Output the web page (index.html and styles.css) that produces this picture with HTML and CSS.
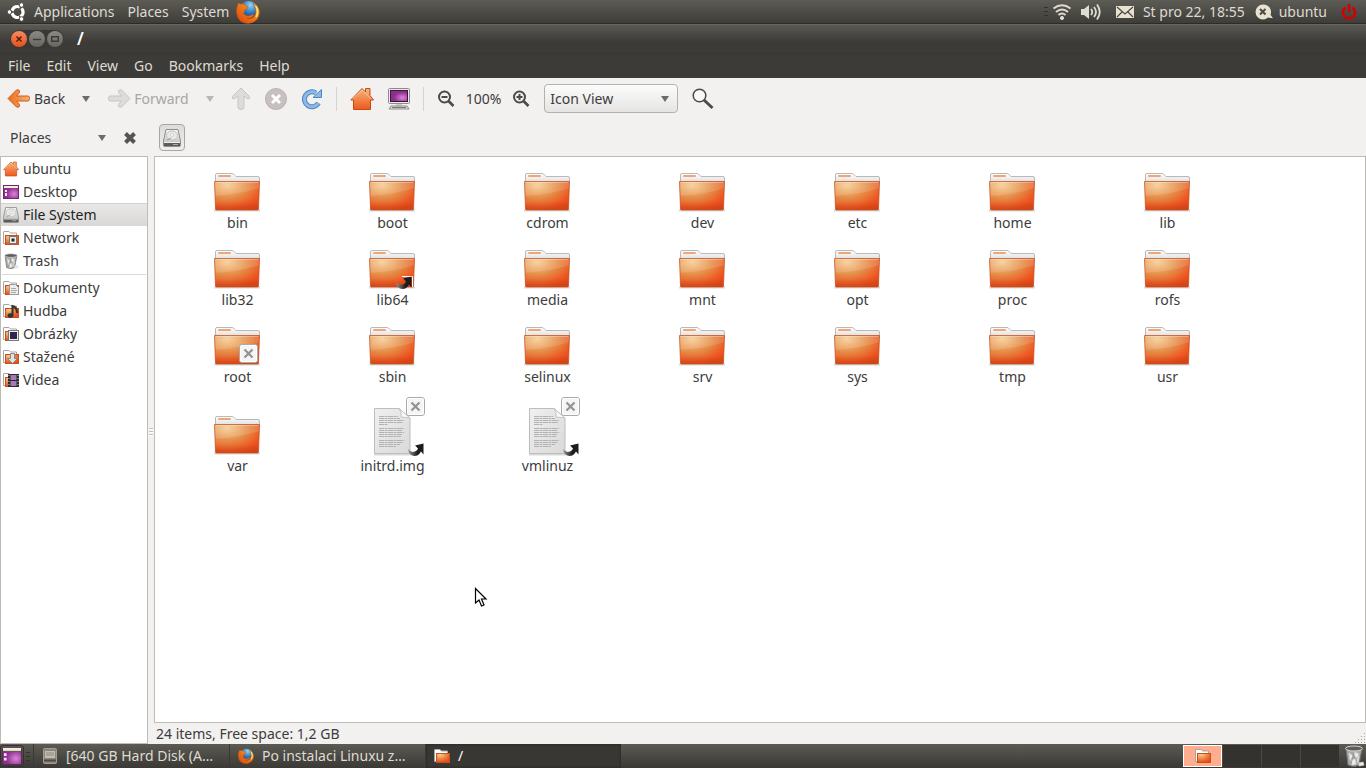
FILE: index.html
```html
<!DOCTYPE html>
<html lang="en">
<head>
<meta charset="utf-8">
<title>/ - File Browser</title>
<link rel="stylesheet" href="styles.css">
</head>
<body>
<svg class="defs" aria-hidden="true">
  <defs>
    <radialGradient id="gFolder" cx=".28" cy=".12" r=".95"><stop offset="0" stop-color="#f6cd92"/><stop offset=".5" stop-color="#e58a45"/><stop offset=".85" stop-color="#ee5420"/><stop offset="1" stop-color="#e24a1a"/></radialGradient>
    <linearGradient id="gShade" x2="0" y2="1"><stop offset=".7" stop-color="#a3330d" stop-opacity="0"/><stop offset="1" stop-color="#a3330d" stop-opacity=".3"/></linearGradient>
    <linearGradient id="gBack" x2="0" y2="1"><stop offset="0" stop-color="#fff"/><stop offset="1" stop-color="#dcdcdc"/></linearGradient>
    <linearGradient id="gDoc" x2="1" y2="1"><stop offset="0" stop-color="#f0f0f0"/><stop offset="1" stop-color="#d9d9d9"/></linearGradient>
    <linearGradient id="gHome" x2="0" y2="1"><stop offset="0" stop-color="#f3b77c"/><stop offset="1" stop-color="#f0571c"/></linearGradient>
    <linearGradient id="gArrow" x1="0" x2="1"><stop offset="0" stop-color="#ee6d1c"/><stop offset="1" stop-color="#f4b476"/></linearGradient>
    <radialGradient id="gPurple" cx=".7" cy=".65"><stop offset="0" stop-color="#dd84d6"/><stop offset="1" stop-color="#8d2f8e"/></radialGradient>
    <linearGradient id="gLink" x2="1"><stop offset="0" stop-color="#999"/><stop offset=".6" stop-color="#1c1c1c"/></linearGradient>
    <linearGradient id="gMetal" x2="0" y2="1"><stop offset="0" stop-color="#f6f6f4"/><stop offset="1" stop-color="#b9b9b6"/></linearGradient>
    <radialGradient id="gGlobe" cx=".6" cy=".2" r=".8"><stop offset="0" stop-color="#8fd5f5"/><stop offset=".5" stop-color="#2c78bd"/><stop offset="1" stop-color="#12285e"/></radialGradient>
    <linearGradient id="gFox" x1="0" y1="1" x2="1" y2="0"><stop offset="0" stop-color="#d8400f"/><stop offset=".6" stop-color="#f0801c"/><stop offset="1" stop-color="#fcd34a"/></linearGradient>
  </defs>
  <symbol id="folder" viewBox="0 0 49 40">
    <path d="M1 37.5h46" stroke="#000" stroke-opacity=".15" stroke-width="2"/>
    <path d="M2.500 10V2Q2.500 .5 4 .5H19Q20.500 .5 22 2.500L23 3.500H45Q46.500 3.500 46.500 5V10z" fill="url(#gBack)" stroke="#b9b9b9"/>
    <rect x="5" y="2" width="13" height="2" rx="1" fill="#f0a672"/>
    <path d="M1.500 8.500H46.500L45.500 36Q45.500 37 44.500 37H3.500Q2.500 37 2.500 36z" fill="url(#gFolder)"/>
    <path d="M1.500 8.500H46.500L46.100 15Q30 21 2 23z" fill="#fff" fill-opacity=".13"/>
    <path d="M1.500 8.500H46.500L45.500 36Q45.500 37 44.500 37H3.500Q2.500 37 2.500 36z" fill="url(#gShade)" stroke="#c4501f" stroke-opacity=".75"/>
    <path d="M2.500 9.500H45.500" stroke="#fff" stroke-opacity=".3"/>
  </symbol>
  <symbol id="link" viewBox="0 0 16 14">
    <path d="M0 6Q3 10 7 8.500Q9.500 7.500 10 5.500L7 2.500L15.500 .5V11.500L13 8.500Q10.500 13 6.500 13Q1 13 0 6z" fill="url(#gLink)"/>
  </symbol>
  <symbol id="locked" viewBox="0 0 20 20">
    <rect x=".5" y=".5" width="18" height="18" rx="2.500" fill="#f5f5f5" stroke="#aaa"/><rect x="1.500" y="1.500" width="16" height="16" rx="1.500" fill="none" stroke="#fff"/>
    <path d="M5.500 5.500l8 8m0-8l-8 8" stroke="#929292" stroke-width="2.200"/>
  </symbol>
  <symbol id="doc" viewBox="0 0 67 52">
    <path d="M15 50.500h37" stroke="#000" stroke-opacity=".15" stroke-width="2"/>
    <path d="M15.500 4.500H40L51 14V49.500H15.500z" fill="url(#gDoc)" stroke="#bdbdbd"/>
    <path d="M40 4.500Q43 8 42 13L51 14z" fill="#fafafa" stroke="#c4c4c4"/>
    <path d="M20 12.500h19M20 14.500h21M20 16.500h25M20 18.500h24M20 20.500h9M20 24.500h25M20 26.500h23M20 28.500h25M20 30.500h23M20 32.500h22M20 36.500h25M20 38.500h24M20 40.500h21M20 42.500h17" stroke="#b2b2b2" stroke-dasharray="5 .5 3 .5"/>
  </symbol>
  <symbol id="mini" viewBox="0 0 16 16">
    <path d="M.5 13.500V2Q.5 1.500 1 1.500H6L7.500 3H13.500V7H4V13.500z" fill="#fff" stroke="#a5a5a5"/>
    <rect x="2.500" y="5.500" width="13" height="9" fill="url(#gFolder)" stroke="#c8501f"/>
  </symbol>
  <symbol id="home" viewBox="0 0 24 24">
    <path d="M12 1.500L15.500 5V1.500H20V8.500L23.500 13H20.500V22.500H3.500V13H.8z" fill="url(#gHome)" stroke="#c14e14" stroke-linejoin="round"/>
    <path d="M2.500 12L12 3L21.500 12" fill="none" stroke="#fbd3a8" stroke-opacity=".7"/>
  </symbol>
  <symbol id="desk" viewBox="0 0 22 20">
    <rect x=".5" y=".5" width="21" height="19" rx="1" fill="url(#gPurple)" stroke="#5f2460"/><rect x="1" y="1" width="20" height="3.500" fill="#eeeedb"/><path d="M1 4.800h20" stroke="#5d6040"/>
    <path d="M2 7h3v3H2zM2 12h3v3H2z" fill="#f4e8f4"/>
  </symbol>
  <symbol id="disk" viewBox="0 0 18 18">
    <path d="M3 .5H15L17.500 12V16.500Q17.500 17.500 16.500 17.500H1.500Q.5 17.500 .5 16.500V12z" fill="url(#gMetal)" stroke="#8e8e8c"/>
    <path d="M1 13h16v4H1z" fill="#5b5b5b"/><path d="M1 13.500h16" stroke="#eee"/><path d="M10 15.500h5" stroke="#aaa"/>
    <ellipse cx="9" cy="6.500" rx="5.500" ry="4.500" fill="#e9e9e7" stroke="#c4c4c2"/><circle cx="9" cy="6" r="1.500" fill="#fff" stroke="#bbb" stroke-width=".6"/><path d="M4 11l4-2" stroke="#999"/>
  </symbol>
  <symbol id="trash" viewBox="0 0 20 22">
    <path d="M2 4L4 20Q10 23 15 20L18 4z" fill="#a9aaa8" stroke="#6d6e6c"/>
    <path d="M5 8l4 3-3 4zM10 7l5 2-3 5zM7 15l4-1 1 5-4 1zM13 14l2-3-1 7zM15 18l4-1 1 3-5 1z" fill="#ececea" stroke="#d5d5d3" stroke-width=".8"/>
    <path d="M9 11l-2 8M10 7l-1 4 4 3" stroke="#8a8b89" fill="none" stroke-width=".8"/>
    <ellipse cx="10" cy="3.500" rx="8.500" ry="2.500" fill="#5e5f5d" stroke="#d5d5d3"/>
  </symbol>
  <symbol id="fox" viewBox="0 0 24 24">
    <circle cx="12.500" cy="11" r="10" fill="url(#gGlobe)"/>
    <path d="M2 4Q3 2 4 4Q7 3 9 5L12 7Q11 9 8.500 10Q9 12 7.500 13Q9 16.500 13 16Q16 14.500 18 14.500Q16 19 11 18Q17 20 19.500 14Q21 9 17 3Q23.500 6.500 23.500 12.500Q23 22 12.500 23.500Q1.500 23 .5 13Q0 8 2 4z" fill="url(#gFox)" stroke="#c34d0c" stroke-width=".5"/>
    <path d="M20 6Q23 12 20 17" stroke="#fde377" stroke-width="1.500" fill="none"/>
  </symbol>
</svg>

<header class="panel panel-top">
  <nav class="panel-menu">
    <button class="pbtn"><svg class="logo" width="20" height="20" viewBox="0 0 20 20"><circle cx="10.500" cy="10" r="5.500" fill="none" stroke="#fff" stroke-width="3.200" stroke-dasharray="9.600 1.920" transform="rotate(70 10.500 10)"/><g fill="#fff" stroke="#4b4a45"><circle cx="2.500" cy="10" r="2.300"/><circle cx="14.500" cy="3" r="2.300"/><circle cx="14.500" cy="17" r="2.300"/></g></svg>Applications</button>
    <button class="pbtn">Places</button>
    <button class="pbtn">System</button>
    <button class="pbtn launcher" aria-label="Firefox"><svg width="24" height="24"><use href="#fox"/></svg></button>
  </nav>
  <div class="indicators">
    <span class="grip"></span>
    <svg class="wifi" width="20" height="18" viewBox="0 0 20 18" fill="none" stroke="#dfdbd2" stroke-width="2"><path d="M1.500 5.500Q10-1 18.500 5.500M4 9Q10 4 16 9M6.500 12Q10 9 13.500 12"/><circle cx="10" cy="15" r="1.600" fill="#dfdbd2" stroke-width="1"/></svg>
    <svg class="sound" width="22" height="18" viewBox="0 0 22 18" fill="none" stroke="#dfdbd2"><path d="M1 6h3l5-4v14l-5-4H1z" fill="#dfdbd2" stroke="none"/><path d="M11 6q2.500 3 0 6M14 4q4 5 0 10M17 1.500q5.500 7.500 0 15" stroke-width="1.800"/></svg>
    <svg class="mail" width="18" height="14" viewBox="0 0 18 14"><rect y="1" width="18" height="12" fill="#e8e2cf"/><path d="M1 2l8 7 8-7M1 12l5-5M17 12l-5-5" fill="none" stroke="#4a4945" stroke-width="1.200"/></svg>
    <time class="clock">St pro 22, 18:55</time>
    <svg class="chat" width="18" height="16" viewBox="0 0 18 16"><path d="M8 .5a7.500 7.500 0 1 0 0 15 8 8 0 0 0 5-2l5 .8-2.500-3.500A7.500 7.500 0 0 0 8 .5z" fill="#e8e2cf"/><path d="M5 5l5.500 5.500m0-5.500L5 10.500" stroke="#4a4945" stroke-width="2"/></svg>
    <span class="user">ubuntu</span>
    <svg class="power" width="16" height="18" viewBox="0 0 16 18" fill="none" stroke="#d40000" stroke-width="2.600"><path d="M4.500 4.500a6 6 0 1 0 7 0M8 1v8"/></svg>
  </div>
</header>

<main class="window">
  <div class="titlebar">
    <div class="winbtns">
      <button class="wb close" aria-label="Close"><svg width="8" height="8"><path d="M1.500 1.500l5 5m0-5l-5 5" stroke="#4b1b08" stroke-width="1.400"/></svg></button>
      <button class="wb" aria-label="Minimize"><svg width="8" height="8"><path d="M0 4.500h8" stroke="#3c3b37" stroke-width="1.400"/></svg></button>
      <button class="wb" aria-label="Maximize"><svg width="8" height="8"><path d="M.7 1.700h6.600v4.600H.7z" fill="none" stroke="#3c3b37" stroke-width="1.400"/></svg></button>
    </div>
    <h1>/</h1>
  </div>
  <nav class="menubar"><button>File</button><button>Edit</button><button>View</button><button>Go</button><button>Bookmarks</button><button>Help</button></nav>

  <div class="toolbar">
    <button class="tb nav-btn"><svg width="24" height="22" viewBox="0 0 24 22"><path d="M1 10.500L9.500 2Q12 1 12.500 3V4.500L9.500 8H21Q22.500 8 22.500 10.500T21 13H9.500L12.500 16.500V18Q12 20 9.500 19z" fill="url(#gArrow)" stroke="#d05a1a"/></svg>Back</button>
    <button class="tb drop" aria-label="Back history"><i class="tri"></i></button>
    <button class="tb nav-btn fwd" disabled><svg width="24" height="22" viewBox="0 0 24 22"><path d="M23 10.500L14.500 2Q12 1 11.500 3V4.500L14.500 8H3Q1.500 8 1.500 10.500T3 13H14.500L11.500 16.500V18Q12 20 14.500 19z" fill="#dedbd9" stroke="#c8c4c1"/></svg>Forward</button>
    <button class="tb drop" disabled aria-label="Forward history"><i class="tri off"></i></button>
    <button class="tb" disabled aria-label="Up"><svg width="20" height="24" viewBox="0 0 20 24"><path d="M10 1L18.500 9.500Q19 12 17 12L13 9V20Q13 22.500 10 22.500T7 20V9L3 12Q1 12 1.500 9.500z" fill="#dedbd9" stroke="#c8c4c1"/></svg></button>
    <button class="tb" disabled aria-label="Stop"><svg width="22" height="22"><circle cx="11" cy="11" r="10.500" fill="#c6c1be" stroke="#b8b3b0"/><path d="M7 7l8 8m0-8l-8 8" stroke="#fff" stroke-width="3"/></svg></button>
    <button class="tb" aria-label="Reload"><svg width="22" height="22" viewBox="0 0 22 22"><path d="M17.500 15A7.500 7.500 0 1 1 15 5" fill="none" stroke="#4b87c4" stroke-width="5"/><path d="M17.500 15A7.500 7.500 0 1 1 15 5" fill="none" stroke="#8db9e2" stroke-width="3"/><path d="M12 9.500L20.500 1.500V9.500z" fill="#8db9e2" stroke="#4b87c4"/></svg></button>
    <span class="vsep"></span>
    <button class="tb" aria-label="Home"><svg width="24" height="24"><use href="#home"/></svg></button>
    <button class="tb" aria-label="Computer"><svg width="22" height="24" viewBox="0 0 22 24"><rect x=".5" y="1.500" width="21" height="15" rx="1" fill="#e9e9e6" stroke="#8c8c88"/><rect x="2.500" y="3.500" width="17" height="11" fill="url(#gPurple)" stroke="#3f123f"/><path d="M8 17h6v3H8z" fill="#ccc"/><path d="M3 19h16l2 3H1z" fill="#e0e0dd" stroke="#8c8c88"/><path d="M4 20.500h14" stroke="#777"/></svg></button>
    <span class="vsep"></span>
    <button class="tb" aria-label="Zoom out"><svg width="18" height="18" viewBox="0 0 18 18" fill="none" stroke="#4a4a4a"><circle cx="7.500" cy="7" r="5.500" stroke-width="2"/><path d="M4.500 7h6" stroke-width="2"/><path d="M11.500 11l5 5" stroke-width="2.600"/></svg></button>
    <span class="zoom">100%</span>
    <button class="tb" aria-label="Zoom in"><svg width="18" height="18" viewBox="0 0 18 18" fill="none" stroke="#4a4a4a"><circle cx="7.500" cy="7" r="5.500" stroke-width="2"/><path d="M4.500 7h6M7.500 4v6" stroke-width="2"/><path d="M11.500 11l5 5" stroke-width="2.600"/></svg></button>
    <span class="combo"><select aria-label="View mode"><option>Icon View</option></select><i class="tri"></i></span>
    <button class="tb" aria-label="Search"><svg width="22" height="22" viewBox="0 0 22 22" fill="none" stroke="#4a4a4a"><circle cx="7.500" cy="7.500" r="6.300" fill="#f8f8f8" stroke-width="1.500"/><path d="M12 12l8.500 8" stroke-width="3"/></svg></button>
  </div>

  <div class="location">
    <div class="side-head"><button class="side-sel">Places<i class="tri"></i></button><button class="side-close" aria-label="Close side pane"><svg width="14" height="14"><path d="M2.500 2.500l9 9m0-9l-9 9" stroke="#555" stroke-width="4"/></svg></button></div>
    <button class="path-btn" aria-label="File System"><svg width="18" height="18"><use href="#disk"/></svg></button>
  </div>

  <div class="body">
    <aside class="side">
      <a href="#"><svg width="16" height="16"><use href="#home"/></svg>ubuntu</a>
      <a href="#"><svg width="16" height="16" viewBox="0 0 16 16"><rect x=".5" y="1.500" width="15" height="13" fill="url(#gPurple)" stroke="#6d2a6e"/><path d="M1 2h14v2H1z" fill="#eeeedb"/><path d="M2 6h2v2H2zM2 9h2v3H2z" fill="#f4e8f4"/></svg>Desktop</a>
      <a href="#" class="sel"><svg width="16" height="16"><use href="#disk"/></svg>File System</a>
      <a href="#"><svg width="16" height="16"><use href="#mini"/><rect x="6.500" y="6.500" width="7" height="7" fill="#eee" stroke="#777"/><path d="M8.500 8.500h3v3h-3z" fill="#222"/></svg>Network</a>
      <a href="#"><svg width="16" height="16"><use href="#trash"/></svg>Trash</a>
      <hr>
      <a href="#"><svg width="16" height="16"><use href="#mini"/><path d="M6.500 4.500h6l3 3v7h-9z" fill="#eee" stroke="#999"/><path d="M8 8.500h5M8 10.500h6M8 12.500h5" stroke="#aaa"/></svg>Dokumenty</a>
      <a href="#"><svg width="16" height="16"><use href="#mini"/><path d="M9.500 12V3Q14 4 14 10" fill="none" stroke="#333" stroke-width="2"/><ellipse cx="7.500" cy="12.500" rx="2.800" ry="2.300" fill="#333"/></svg>Hudba</a>
      <a href="#"><svg width="16" height="16"><use href="#mini"/><rect x="5.500" y="4.500" width="10" height="10" fill="#eee" stroke="#777"/><rect x="7" y="6" width="7" height="7" fill="#32254a"/></svg>Obrázky</a>
      <a href="#"><svg width="16" height="16"><use href="#mini"/><path d="M7.500 4.500h4v5h3l-5 5-5-5h3z" fill="#e2e2e2" stroke="#888"/></svg>Stažené</a>
      <a href="#"><svg width="16" height="16"><use href="#mini"/><path d="M5 2h11v13H5z" fill="#2b2b2b"/><path d="M7.500 3h6v5h-6zM7.500 9h6v5h-6z" fill="#a679b4"/><path d="M6 3v12M15 3v12" stroke="#ccc" stroke-dasharray="1 2"/></svg>Videa</a>
    </aside>
    <div class="splitter"><span class="grip light"></span></div>
    <section class="content">
      <div class="files">
        <a href="#"><svg class="ic"><use href="#folder"/></svg>bin</a>
        <a href="#"><svg class="ic"><use href="#folder"/></svg>boot</a>
        <a href="#"><svg class="ic"><use href="#folder"/></svg>cdrom</a>
        <a href="#"><svg class="ic"><use href="#folder"/></svg>dev</a>
        <a href="#"><svg class="ic"><use href="#folder"/></svg>etc</a>
        <a href="#"><svg class="ic"><use href="#folder"/></svg>home</a>
        <a href="#"><svg class="ic"><use href="#folder"/></svg>lib</a>
        <a href="#"><svg class="ic"><use href="#folder"/></svg>lib32</a>
        <a href="#"><svg class="ic"><use href="#folder"/><path d="M44.500 37V26.500H34" fill="none" stroke="#fff"/><use href="#link" x="28" y="26" width="16" height="14"/></svg>lib64</a>
        <a href="#"><svg class="ic"><use href="#folder"/></svg>media</a>
        <a href="#"><svg class="ic"><use href="#folder"/></svg>mnt</a>
        <a href="#"><svg class="ic"><use href="#folder"/></svg>opt</a>
        <a href="#"><svg class="ic"><use href="#folder"/></svg>proc</a>
        <a href="#"><svg class="ic"><use href="#folder"/></svg>rofs</a>
        <a href="#"><svg class="ic"><use href="#folder"/><use href="#locked" x="26" y="17" width="20" height="20"/></svg>root</a>
        <a href="#"><svg class="ic"><use href="#folder"/></svg>sbin</a>
        <a href="#"><svg class="ic"><use href="#folder"/></svg>selinux</a>
        <a href="#"><svg class="ic"><use href="#folder"/></svg>srv</a>
        <a href="#"><svg class="ic"><use href="#folder"/></svg>sys</a>
        <a href="#"><svg class="ic"><use href="#folder"/></svg>tmp</a>
        <a href="#"><svg class="ic"><use href="#folder"/></svg>usr</a>
        <a href="#"><svg class="ic"><use href="#folder"/></svg>var</a>
        <a href="#"><svg class="ic tall"><use href="#doc"/><use href="#locked" x="47" y="-7" width="20" height="20"/><use href="#link" x="49" y="39" width="16" height="14"/></svg>initrd.img</a>
        <a href="#"><svg class="ic tall"><use href="#doc"/><use href="#locked" x="47" y="-7" width="20" height="20"/><use href="#link" x="49" y="39" width="16" height="14"/></svg>vmlinuz</a>
      </div>
      <footer class="status">24 items, Free space: 1,2 GB<svg width="11" height="11"><path d="M9.500 0v11M6.500 3v8M3.500 6v5M.5 9v2" stroke="#aaa69f" stroke-dasharray="1 2"/></svg></footer>
    </section>
  </div>
</main>

<footer class="panel panel-bottom">
  <button class="show-desk" aria-label="Show desktop"><svg width="22" height="18" viewBox="0 0 22 18"><use href="#desk" width="22" height="18"/></svg></button>
  <span class="grip"></span>
  <button class="task"><svg width="16" height="16"><rect x="1.500" y=".5" width="13" height="15" rx="1" fill="#8d867a" stroke="#a39c8f"/><path d="M3 3h10v7H3z" fill="#c2bdb3"/><path d="M4 5h8M4 7h8" stroke="#8a8a86"/><path d="M2 12.500h12" stroke="#4d4a44" stroke-width="2"/></svg><span>[640 GB Hard Disk (A…</span></button>
  <button class="task"><svg width="16" height="16"><use href="#fox"/></svg><span>Po instalaci Linuxu z…</span></button>
  <button class="task active"><svg width="16" height="16"><use href="#mini"/></svg><span>/</span></button>
  <div class="pager"><button class="cur" aria-label="Workspace 1"><svg width="16" height="16"><use href="#mini"/></svg></button><button aria-label="Workspace 2"></button><button aria-label="Workspace 3"></button><button aria-label="Workspace 4"></button></div>
  <button class="bin" aria-label="Trash"><svg width="22" height="22"><use href="#trash"/></svg></button>
</footer>

<svg class="cursor" width="14" height="21" viewBox="0 0 14 21"><path d="M1.500 1.500V16L5 13l2.500 6 2.500-1-2.500-6H12z" fill="#fff" stroke="#000" stroke-width="1.200"/></svg>
</body>
</html>
```
FILE: styles.css
```css
* { box-sizing: border-box; }
body {
  margin: 0;
  min-height: 100vh;
  display: flex;
  flex-direction: column;
  background: #f2f1f0;
  color: #3c3c3c;
  font: 14px/20px "Noto Sans", "Open Sans", sans-serif;
}
button, select { font: inherit; color: inherit; background: none; border: 0; padding: 0; margin: 0; }
button { display: flex; align-items: center; }
a { color: inherit; text-decoration: none; }
svg { display: block; flex: none; }
.defs { position: absolute; width: 0; height: 0; }

/* Desktop panels */
.panel {
  display: flex;
  align-items: center;
  height: 24px;
  color: #dfdbd2;
  background: linear-gradient(#5c5b54, #3e3d39);
}
.panel-top { border-bottom: 1px solid #2d2c28; justify-content: space-between; }
.panel-menu { display: flex; align-items: center; gap: 13px; padding-left: 7px; }
.logo { margin-right: 7px; }
.launcher { margin-left: -6px; }
.indicators { display: flex; align-items: center; padding-right: 9px; }
.grip { width: 4px; height: 9px; background: repeating-linear-gradient(#33322e 0 1px, transparent 1px 4px); }
.wifi { margin: 0 8px 0 4px; }
.mail { margin: 0 9px 0 14px; }
.chat { margin: 0 6px 0 10px; }
.power { margin-left: 14px; }

/* Window frame */
.window { flex: 1; display: flex; flex-direction: column; }
.titlebar {
  display: flex;
  align-items: center;
  gap: 13px;
  height: 29px;
  padding: 0 0 1px 10px;
  background: linear-gradient(#5a5953, #3c3b37 60%);
  border-top: 1px solid #67665f;
}
.titlebar h1 { margin: 0; font-size: 17px; font-weight: 600; line-height: 20px; color: #fff; }
.winbtns { display: flex; gap: 2px; padding: 1px; border-radius: 9px; background: #393834; }
.wb { justify-content: center; width: 16px; height: 16px; border-radius: 50%; background: linear-gradient(#8b8a83, #66655f); }
.wb.close { background: linear-gradient(#f58a63, #e2521a); }
.menubar {
  display: flex;
  gap: 16px;
  height: 25px;
  padding-left: 8px;
  color: #dfdbd2;
  background: #3c3b37;
  border-top: 1px solid #383733;
}

/* Toolbar */
.toolbar { display: flex; align-items: center; gap: 14px; height: 41px; padding-left: 7px; }
.nav-btn { gap: 3px; padding-right: 3px; }
.fwd, .fwd:disabled { color: #a9a5a1; }
.drop { margin-right: 3px; }
.tri { width: 0; height: 0; border: 4px solid transparent; border-top: 6px solid #6c6c6c; border-bottom: 0; }
.tri.off { border-top-color: #bab6b2; }
.vsep { width: 1px; height: 24px; margin: 0 -1px; background: #d6d3d0; }
.zoom { margin: 0 -3px; }
.combo {
  display: flex;
  align-items: center;
  width: 134px;
  height: 29px;
  padding-right: 8px;
  border: 1px solid #b5b1ac;
  border-radius: 4px;
  background: linear-gradient(#fcfcfc, #e6e5e4);
}
.combo select { flex: 1; appearance: none; padding-left: 5px; outline: 0; }

/* Side pane header and path bar */
.location { display: flex; align-items: center; height: 37px; }
.side-head { display: flex; align-items: center; width: 159px; padding-left: 10px; gap: 17px; }
.side-sel { justify-content: space-between; width: 96px; }
.path-btn {
  justify-content: center;
  width: 26px;
  height: 27px;
  border: 1px solid #a9a5a0;
  border-radius: 4px;
  background: linear-gradient(#dedcda, #efeeed);
}

/* Panes */
.body { flex: 1; display: flex; }
.side { width: 148px; border: 1px solid #bfbcb7; background: #fff; }
.side a { display: flex; align-items: center; gap: 4px; height: 23px; padding-left: 2px; }
.side a.sel { background: linear-gradient(#e9e8e7, #d9d8d6); border-top: 1px solid #d3d1ce; color: #222; }
.side hr { height: 1px; margin: 2px 1px 1px; border: 0; background: #dcdad8; }
.splitter { width: 6px; display: flex; align-items: center; justify-content: center; padding-bottom: 36px; }
.grip.light { height: 8px; background: repeating-linear-gradient(#c5c2be 0 1px, #fff 1px 2px, transparent 2px 3px); }
.content { flex: 1; display: flex; flex-direction: column; }
.files {
  flex: 1;
  display: grid;
  grid-template-columns: repeat(auto-fill, 155px);
  align-content: start;
  align-items: end;
  row-gap: 17px;
  padding: 16px 5px;
  border: 1px solid #bfbcb7;
  background: #fff;
}
.files a { display: flex; flex-direction: column; align-items: center; }
.ic { width: 49px; height: 40px; overflow: visible; }
.ic.tall { width: 67px; height: 52px; }
.status { display: flex; justify-content: space-between; align-items: flex-end; height: 21px; padding-left: 2px; }

/* Task bar */
.panel-bottom { background: linear-gradient(#5b5a53, #3a3935); }
.show-desk { width: 24px; height: 22px; justify-content: center; border: 1px solid #33322e; border-radius: 3px; }
.panel-bottom .grip { margin: 0 3px 0 2px; }
.task { gap: 8px; width: 196px; height: 24px; padding-left: 8px; border-left: 1px solid #3a3935; }
.task span { white-space: nowrap; }
.task.active { background: #383733; color: #fff; box-shadow: inset 0 0 3px #24231f; }
.pager { display: flex; gap: 1px; margin: 0 4px 0 auto; background: #4a4945; }
.pager button { justify-content: center; width: 38px; height: 22px; background: #33322f; }
.pager .cur { width: 39px; border: 1px solid #fff; background: #ffac8f; }
.bin { width: 23px; }

.cursor { position: absolute; left: 474px; top: 587px; }
```
